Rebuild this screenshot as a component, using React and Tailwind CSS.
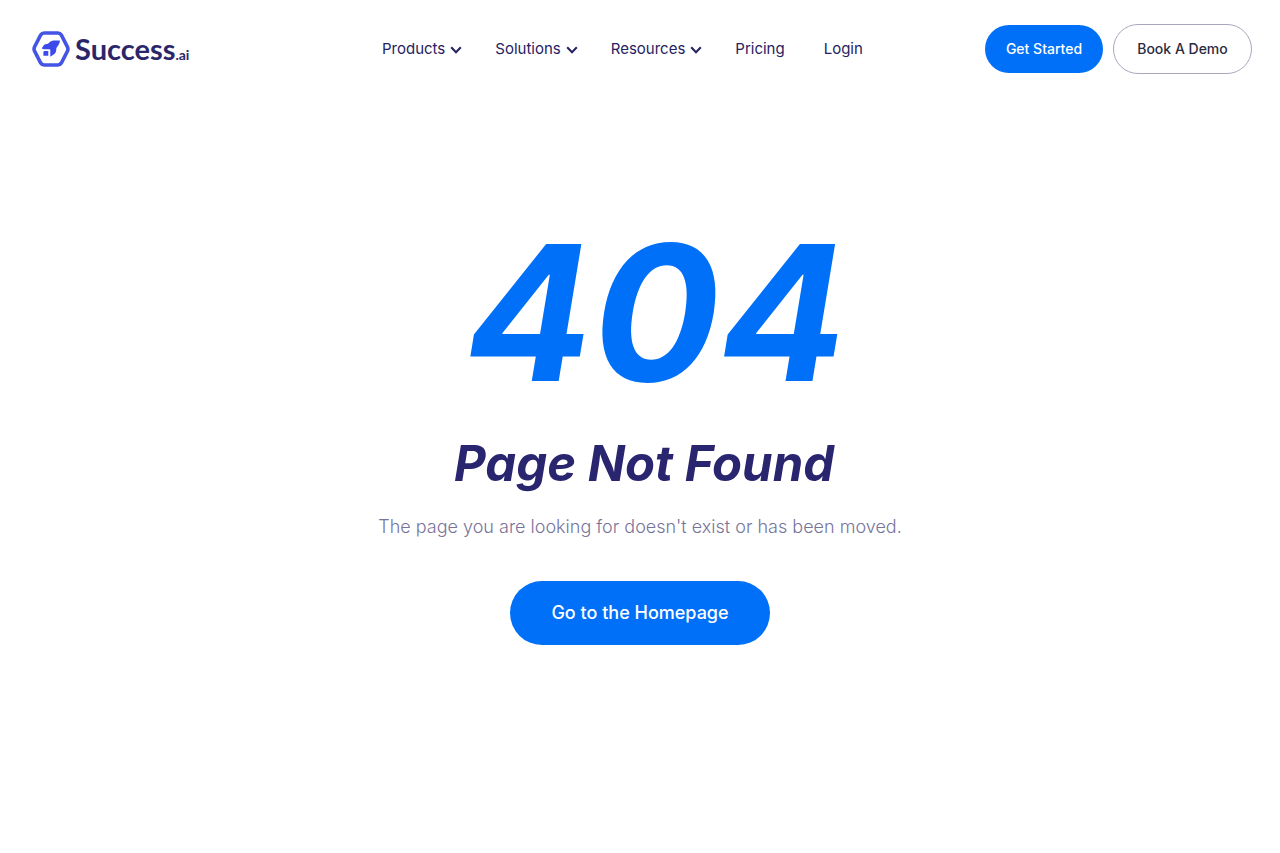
const NAV = [
  { label: 'Products', menu: true },
  { label: 'Solutions', menu: true },
  { label: 'Resources', menu: true },
  { label: 'Pricing' },
  { label: 'Login' },
]

function Chevron() {
  return (
    <svg viewBox="0 0 12 8" className="w-3 h-2 mt-px" fill="none" aria-hidden="true">
      <path d="M1.2 1.2 6 6.2l4.8-5" stroke="#262262" strokeWidth="2" />
    </svg>
  )
}

function Logo() {
  return (
    <a href="#" className="flex items-center gap-1" aria-label="Success.ai">
      <svg viewBox="0 0 38 36" className="w-[38px] h-9" fill="none" aria-hidden="true">
        {/* Hexagon frame */}
        <path
          d="M12.2 2h13.6q2.3 0 3.5 2l6.1 11.8q1.1 2.2 0 4.4L29.3 32q-1.2 2-3.5 2H12.2q-2.3 0-3.5-2L2.6 20.2q-1.1-2.2 0-4.4L8.7 4q1.2-2 3.5-2z"
          stroke="#4454e4"
          strokeWidth="3.6"
        />
        {/* Rocket and its tail */}
        <path
          d="M28 9.4h-6.500q-2 .1-3.400 1.300L16 12.700l-2.600.5q-1.100.3-1.800 1.200L9.8 17.300q1 1 2.400.9h5.200q.9.1.9 1v6.600l4.100-2.900q1.500-1.200 1.700-2.900l.3-3 1.800-2.400q1.500-2.200 1.800-5.200z"
          fill="#3c4aec"
        />
        <path d="M12.7 20h3.600v4.800h-4.900v-3.500q0-1.300 1.300-1.300z" fill="#3c4aec" />
      </svg>
      <span className="pl-px font-[Lato,sans-serif] text-[29px] leading-9 font-bold text-[#2a2669]">
        Success<span className="text-sm">.ai</span>
      </span>
    </a>
  )
}

export default function App() {
  return (
    <div className="min-h-screen bg-white font-[Inter,sans-serif] text-[#262262]">
      <header className="flex items-center py-6 pl-8 pr-7">
        <div className="w-[350px]">
          <Logo />
        </div>
        <nav className="flex items-center gap-[33px]">
          {NAV.map((item) =>
            item.menu ? (
              <button key={item.label} className="flex items-center gap-[5px] text-[15px] leading-6">
                {item.label}
                <Chevron />
              </button>
            ) : (
              <a key={item.label} href="#" className="pr-1.5 text-[15px] leading-6">
                {item.label}
              </a>
            ),
          )}
        </nav>
        <div className="ml-auto flex items-center gap-2.5">
          <a
            href="#"
            className="grid h-12 w-[118px] place-items-center rounded-full bg-[#0070f8] text-sm font-medium text-white"
          >
            Get Started
          </a>
          <a
            href="#"
            className="grid h-[50px] w-[139px] place-items-center rounded-full border border-[#a9a7bd] text-sm font-medium text-[#2b2b40]"
          >
            Book A Demo
          </a>
        </div>
      </header>

      <main className="flex flex-col items-center px-4 pt-[115px] text-center">
        <h1 className="pl-8 text-[188px] leading-[200px] font-bold italic text-[#0070f8]">404</h1>
        <h2 className="mt-5 pl-2 text-[49px] leading-[62px] font-bold italic text-[#29256f]">
          Page Not Found
        </h2>
        <p className="mt-[18px] text-lg leading-7 font-light text-[#77749a]">
          The page you are looking for doesn't exist or has been moved.
        </p>
        <a
          href="#"
          className="mt-10 grid h-16 w-[260px] place-items-center rounded-full bg-[#0070f8] text-lg font-medium text-white"
        >
          Go to the Homepage
        </a>
      </main>
    </div>
  )
}
